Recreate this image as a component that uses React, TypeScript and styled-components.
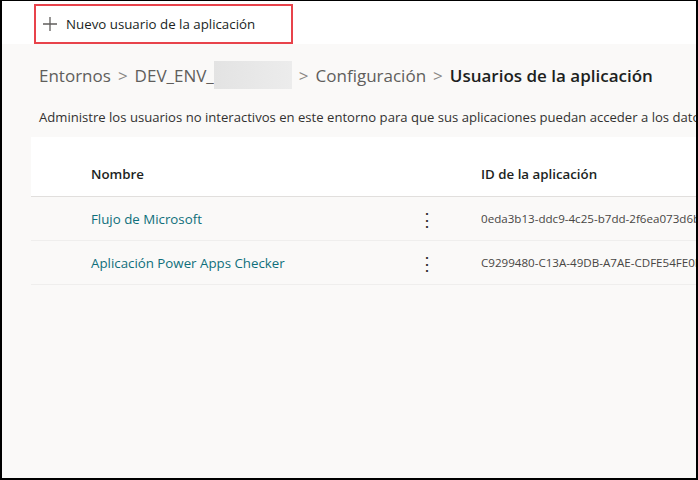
import React from "react";
import styled, { createGlobalStyle } from "styled-components";

const GlobalStyle = createGlobalStyle`
  body {
    margin: 0;
    background: #fff;
    font-family: "Segoe UI", "Open Sans", "Noto Sans", sans-serif;
  }
`;

interface AppUser {
  name: string;
  appId: string;
}

const users: AppUser[] = [
  { name: "Flujo de Microsoft", appId: "0eda3b13-ddc9-4c25-b7dd-2f6ea073d6b7" },
  { name: "Aplicación Power Apps Checker", appId: "C9299480-C13A-49DB-A7AE-CDFE54FE0F0C" },
];

const Frame = styled.div`
  width: 698px;
  height: 480px;
  box-sizing: border-box;
  border-top: 1px solid #000;
  border-left: 2px solid #000;
  border-right: 2px solid #000;
  border-bottom: 2px solid #000;
  background: #faf9f8;
  overflow: hidden;
  display: flex;
  flex-direction: column;
`;

const CommandBar = styled.div`
  height: 43px;
  background: #fff;
  display: flex;
  align-items: center;
  padding-left: 32px;
  flex-shrink: 0;
`;

const CommandButton = styled.div`
  height: 40px;
  box-sizing: border-box;
  margin-top: 2px;
  border: 2px solid #e8434b;
  display: flex;
  align-items: center;
  gap: 8px;
  padding: 0 36px 0 6px;
  font-size: 13.3px;
  color: #201f1e;
  cursor: pointer;
`;

const Main = styled.div`
  padding-left: 29px;
  display: flex;
  flex-direction: column;
`;

const Breadcrumb = styled.div`
  display: flex;
  align-items: center;
  height: 28px;
  margin-top: 17px;
  padding-left: 8px;
  font-size: 17px;
  color: #605e5c;
  white-space: nowrap;
`;

const Crumb = styled.span<{ $current?: boolean }>`
  font-weight: ${({ $current }) => ($current ? 600 : 400)};
  color: ${({ $current }) => ($current ? "#201f1e" : "#605e5c")};
`;

const Separator = styled.span`
  display: inline-flex;
  align-items: center;
  padding: 0 7px;
  color: #8a8886;
`;

const Redacted = styled.span`
  display: inline-block;
  width: 78px;
  height: 28px;
  background: linear-gradient(90deg, #e3e3e3, #ececec);
`;

const Description = styled.div`
  margin-top: 19px;
  padding-left: 8px;
  font-size: 13.1px;
  color: #323130;
  white-space: nowrap;
`;

const Table = styled.div`
  margin-top: 11px;
  display: flex;
  flex-direction: column;
`;

const Row = styled.div<{ $header?: boolean }>`
  display: grid;
  grid-template-columns: 60px 320px 70px 1fr;
  align-items: center;
  height: ${({ $header }) => ($header ? "44px" : "43px")};
  padding-top: ${({ $header }) => ($header ? "15px" : "0")};
  background: ${({ $header }) => ($header ? "#fff" : "transparent")};
  border-bottom: 1px solid ${({ $header }) => ($header ? "#e1dfdd" : "#efeeed")};
  white-space: nowrap;
  overflow: hidden;
`;

const HeaderCell = styled.div`
  font-size: 13.3px;
  font-weight: 600;
  color: #201f1e;
`;

const NameLink = styled.a`
  font-size: 13.3px;
  color: #0f6f7b;
  text-decoration: none;
`;

const MoreButton = styled.div`
  padding-left: 7px;
  font-size: 18px;
  color: #323130;
  line-height: 1;
`;

const IdCell = styled.div`
  font-size: 11.6px;
  color: #484644;
`;

const PlusIcon = () => (
  <svg width="16" height="16" viewBox="0 0 16 16" fill="none">
    <path d="M8 1v14M1 8h14" stroke="#605e5c" strokeWidth="1.3" />
  </svg>
);

const App = () => {
  return (
    <Frame>
      <GlobalStyle />
      <CommandBar>
        <CommandButton>
          <PlusIcon />
          <span>Nuevo usuario de la aplicación</span>
        </CommandButton>
      </CommandBar>
      <Main>
        <Breadcrumb>
          <Crumb>Entornos</Crumb>
          <Separator>&gt;</Separator>
          <Crumb>DEV_ENV_</Crumb>
          <Redacted />
          <Separator>&gt;</Separator>
          <Crumb>Configuración</Crumb>
          <Separator>&gt;</Separator>
          <Crumb $current>Usuarios de la aplicación</Crumb>
        </Breadcrumb>
        <Description>
          Administre los usuarios no interactivos en este entorno para que sus aplicaciones puedan acceder a los datos.
        </Description>
        <Table>
          <Row $header>
            <span />
            <HeaderCell>Nombre</HeaderCell>
            <span />
            <HeaderCell>ID de la aplicación</HeaderCell>
          </Row>
          {users.map((u) => (
            <Row key={u.appId}>
              <span />
              <NameLink href="#">{u.name}</NameLink>
              <MoreButton>⋮</MoreButton>
              <IdCell>{u.appId}</IdCell>
            </Row>
          ))}
        </Table>
      </Main>
    </Frame>
  );
};

export default App;
